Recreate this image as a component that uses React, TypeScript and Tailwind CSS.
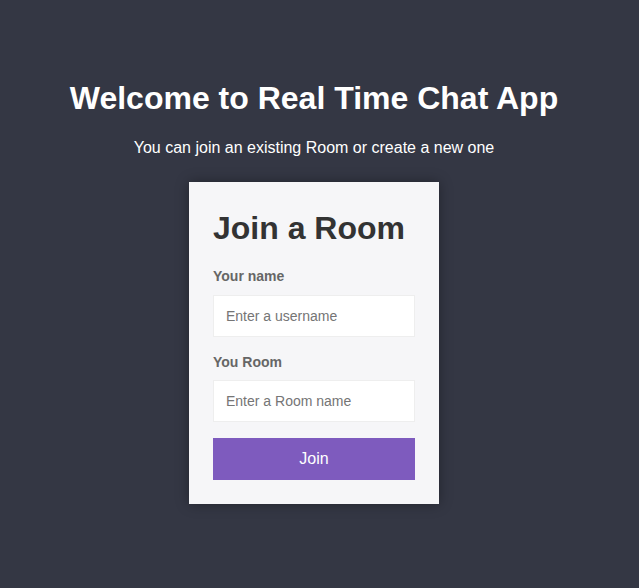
import { useState } from "react";

export default function App() {
  const [name, setName] = useState("");
  const [room, setRoom] = useState("");

  return (
    <div className="min-h-[588px] bg-[#343744] font-['Liberation_Sans',Arial,sans-serif]">
      <div className="w-[628px] flex flex-col items-center pt-[80px]">
        <h1 className="text-[32px] leading-[37px] font-bold text-white">
          Welcome to Real Time Chat App
        </h1>
        <p className="mt-[22px] text-[16px] leading-[18px] text-white">
          You can join an existing Room or create a new one
        </p>

        <div className="mt-[25px] w-[250px] bg-[#f6f6f8] p-6 shadow-[0_0_12px_rgba(0,0,0,0.35)]">
          <h2 className="mt-[4px] text-[32px] leading-[37px] font-bold text-[#333]">Join a Room</h2>

          <label className="block mt-[21px] mb-[11px] text-[14px] leading-[16px] font-bold text-[#666]">
            Your name
          </label>
          <input
            value={name}
            onChange={(e) => setName(e.target.value)}
            placeholder="Enter a username"
            className="block w-full h-[42px] px-3 bg-white border border-[#eeeeee] text-[14px] text-[#333] placeholder:text-[#757575] outline-none"
          />

          <label className="block mt-[17px] mb-[10px] text-[14px] leading-[16px] font-bold text-[#666]">
            You Room
          </label>
          <input
            value={room}
            onChange={(e) => setRoom(e.target.value)}
            placeholder="Enter a Room name"
            className="block w-full h-[42px] px-3 bg-white border border-[#eeeeee] text-[14px] text-[#333] placeholder:text-[#757575] outline-none"
          />

          <button className="mt-[16px] w-full h-[42px] bg-[#7e5bbe] text-white text-[16px]">
            Join
          </button>
        </div>
      </div>
    </div>
  );
}
